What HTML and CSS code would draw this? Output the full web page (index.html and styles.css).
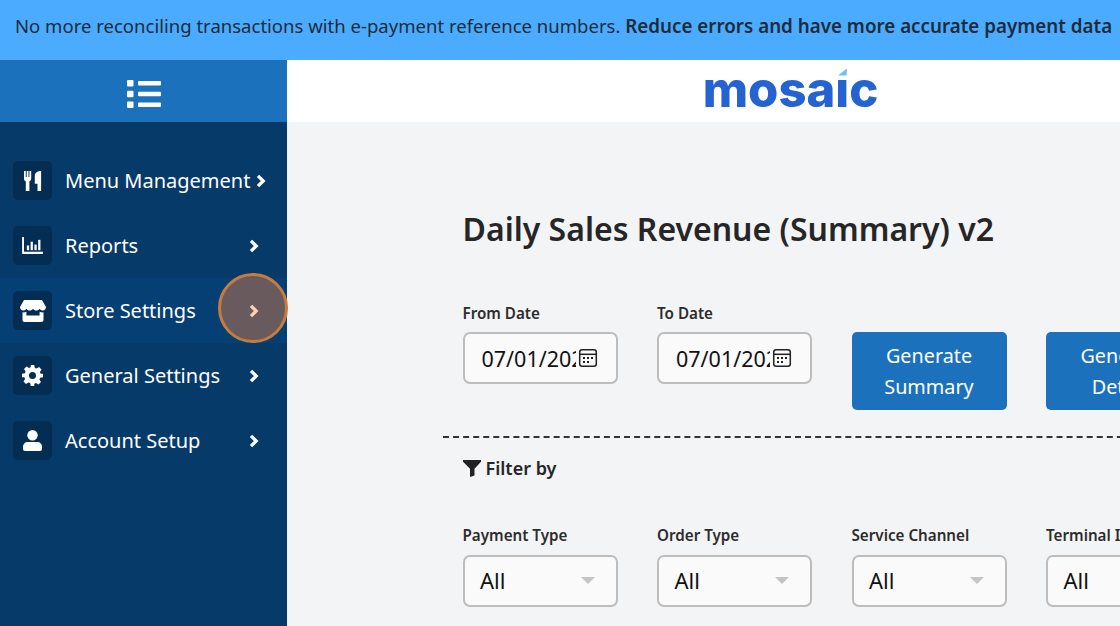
FILE: index.html
```html
<!DOCTYPE html>
<html lang="en">
<head>
<meta charset="utf-8">
<title>Daily Sales Revenue (Summary) v2</title>
<link rel="stylesheet" href="styles.css">
</head>
<body>
<div class="banner">No more reconciling transactions with e-payment reference numbers. <b>Reduce errors and have more accurate payment data</b></div>
<div class="app">
  <aside class="sidebar">
    <div class="side-head">
      <svg class="burger" viewBox="0 0 34 28" width="34" height="28" fill="#fff"><rect x="0" y="0" width="6.500" height="6.500" rx="1"/><rect x="0" y="10.800" width="6.500" height="6.500" rx="1"/><rect x="0" y="21.500" width="6.500" height="6.500" rx="1"/><rect x="11" y="1" width="23" height="4.600" rx="1"/><rect x="11" y="11.700" width="23" height="4.600" rx="1"/><rect x="11" y="22.400" width="23" height="4.600" rx="1"/></svg>
    </div>
    <nav class="nav">
      <a class="nav-item">
        <span class="nav-icon"><svg viewBox="0 0 20 24" width="18" height="22" fill="#fff"><path d="M0 1h2v6.500h1V1h2v6.500h1V1h2v8.500c0 1.500-1 2.500-2 2.800V23H2V12.300c-1-.3-2-1.300-2-2.800z"/><path d="M19 1v22h-4v-8h-3V6c0-3 3-5 7-5z"/></svg></span>
        <span class="nav-label">Menu Management</span>
        <svg class="chev chev-tight" viewBox="0 0 10 14" width="10" height="14"><path d="M2 1.800 7.200 7 2 12.200" fill="none" stroke="#fff" stroke-width="3.300"/></svg>
      </a>
      <a class="nav-item">
        <span class="nav-icon"><svg viewBox="0 0 22 18" width="21" height="17" fill="#fff"><path d="M0 0h2v15.500h20V18H0z"/><rect x="5" y="9" width="2.400" height="5"/><rect x="9" y="5" width="2.400" height="9"/><rect x="13" y="8" width="2.400" height="6"/><rect x="17" y="3" width="2.400" height="11"/></svg></span>
        <span class="nav-label">Reports</span>
        <svg class="chev" viewBox="0 0 10 14" width="10" height="14"><path d="M2 1.800 7.200 7 2 12.200" fill="none" stroke="#fff" stroke-width="3.300"/></svg>
      </a>
      <a class="nav-item active">
        <span class="nav-icon"><svg viewBox="0 0 26 22" width="26" height="22" fill="#fff"><path d="M4 0h18l4 7c0 2-1.500 3.500-3.200 3.500-1.300 0-2.500-.7-3.200-1.800-.7 1.100-1.900 1.800-3.300 1.800s-2.600-.7-3.300-1.800c-.7 1.100-1.900 1.800-3.300 1.800S7.100 9.800 6.400 8.700c-.7 1.100-1.900 1.800-3.200 1.800C1.500 10.500 0 9 0 7z"/><path d="M2.500 12.300c.9.200 2.400.2 3.900-.6v3.800h13.200v-3.800c1.500.8 3 .8 3.900.6V20a2 2 0 0 1-2 2H4.500a2 2 0 0 1-2-2z"/></svg></span>
        <span class="nav-label">Store Settings</span>
        <svg class="chev" viewBox="0 0 10 14" width="10" height="14"><path d="M2 1.800 7.200 7 2 12.200" fill="none" stroke="#fff" stroke-width="3.300"/></svg>
        <span class="spot"></span>
      </a>
      <a class="nav-item">
        <span class="nav-icon"><svg viewBox="0 0 24 24" width="21" height="21"><path fill="#fff" fill-rule="evenodd" d="M10 0h4l.7 3.300 1.900.8 2.900-1.800 2.800 2.800-1.800 2.900.8 1.900L24 10v4l-3.300.7-.8 1.900 1.800 2.900-2.800 2.800-2.900-1.800-1.900.8L14 24h-4l-.7-3.300-1.900-.8-2.900 1.800-2.800-2.800 1.800-2.900-.8-1.900L0 14v-4l3.300-.7.8-1.900-1.800-2.900 2.800-2.800 2.900 1.800 1.900-.8zM12 8a4 4 0 1 0 0 8 4 4 0 0 0 0-8z"/></svg></span>
        <span class="nav-label">General Settings</span>
        <svg class="chev" viewBox="0 0 10 14" width="10" height="14"><path d="M2 1.800 7.200 7 2 12.200" fill="none" stroke="#fff" stroke-width="3.300"/></svg>
      </a>
      <a class="nav-item">
        <span class="nav-icon"><svg viewBox="0 0 20 22" width="19" height="21" fill="#fff"><circle cx="10" cy="5.500" r="5.500"/><path d="M5 12.500h10c2.800 0 5 2.200 5 5V20a2 2 0 0 1-2 2H2a2 2 0 0 1-2-2v-2.500c0-2.800 2.200-5 5-5z"/></svg></span>
        <span class="nav-label">Account Setup</span>
        <svg class="chev" viewBox="0 0 10 14" width="10" height="14"><path d="M2 1.800 7.200 7 2 12.200" fill="none" stroke="#fff" stroke-width="3.300"/></svg>
      </a>
    </nav>
  </aside>
  <main class="main">
    <header class="topbar"><span class="logo">mosaic<svg class="logo-tick" viewBox="0 0 12 10" width="12" height="10"><rect width="12" height="10" fill="#fff"/><path d="M1 7.500 10 .5 9.500 7.500z" fill="#6cc0f5"/></svg></span></header>
    <section class="content">
      <h1 class="title">Daily Sales Revenue (Summary) v2</h1>
      <div class="row date-row">
        <div class="field"><label class="label">From Date</label>
          <div class="control date"><span class="date-text">07/01/2024</span>
            <svg class="cal" viewBox="0 0 20 20" width="20" height="20"><rect x="1.700" y="1.700" width="16.600" height="16.600" rx="2.500" fill="none" stroke="#222" stroke-width="1.500"/><path d="M2 6.300h16" stroke="#222" stroke-width="1.500"/><g fill="#222"><rect x="5" y="9" width="2" height="2"/><rect x="9" y="9" width="2" height="2"/><rect x="13" y="9" width="2" height="2"/><rect x="5" y="13" width="2" height="2"/><rect x="9" y="13" width="2" height="2"/></g></svg>
          </div></div>
        <div class="field"><label class="label">To Date</label>
          <div class="control date"><span class="date-text">07/01/2024</span>
            <svg class="cal" viewBox="0 0 20 20" width="20" height="20"><rect x="1.700" y="1.700" width="16.600" height="16.600" rx="2.500" fill="none" stroke="#222" stroke-width="1.500"/><path d="M2 6.300h16" stroke="#222" stroke-width="1.500"/><g fill="#222"><rect x="5" y="9" width="2" height="2"/><rect x="9" y="9" width="2" height="2"/><rect x="13" y="9" width="2" height="2"/><rect x="5" y="13" width="2" height="2"/><rect x="9" y="13" width="2" height="2"/></g></svg>
          </div></div>
        <button class="btn">Generate Summary</button>
        <button class="btn">Generate Details</button>
      </div>
      <div class="divider"></div>
      <div class="filter-head">
        <svg viewBox="0 0 18 17" width="18" height="17" fill="#222"><path d="M0 0h18v1.800l-6.500 7V15.500L7 17V8.800L0 1.800z"/></svg>
        <span>Filter by</span>
      </div>
      <div class="row filter-row">
        <div class="field"><label class="label">Payment Type</label><div class="control select"><span>All</span><i class="caret"></i></div></div>
        <div class="field"><label class="label">Order Type</label><div class="control select"><span>All</span><i class="caret"></i></div></div>
        <div class="field"><label class="label">Service Channel</label><div class="control select"><span>All</span><i class="caret"></i></div></div>
        <div class="field"><label class="label">Terminal ID</label><div class="control select"><span>All</span><i class="caret"></i></div></div>
      </div>
    </section>
  </main>
</div>
</body>
</html>
```
FILE: styles.css
```css
* { box-sizing: border-box; }
html, body { margin: 0; height: 100%; overflow: hidden; }
body { width: 1120px; height: 626px; font-family: "Noto Sans", sans-serif; color: #222; background: #f3f4f6; }

.banner { height: 60px; background: #4aabff; color: #1e2b38; font-size: 18.550px; line-height: 51px; padding-left: 15px; white-space: nowrap; overflow: hidden; }
.banner b { font-weight: 600; font-size: 18.800px; }

.app { display: flex; height: 566px; }

.sidebar { width: 287px; flex: none; background: #063a68; }
.side-head { height: 62px; padding-top: 6px; background: #1c71bc; display: flex; align-items: center; justify-content: center; }
.nav { padding-top: 26px; }
.nav-item { position: relative; height: 65px; display: flex; align-items: center; padding-left: 13px; color: #fff; }
.nav-item.active { background: #053f73; }
.nav-icon { width: 39px; height: 39px; flex: none; border-radius: 5px; background: #042d54; display: flex; align-items: center; justify-content: center; }
.nav-label { margin-left: 13px; font-size: 20px; white-space: nowrap; }
.chev { margin-left: auto; margin-right: 28px; flex: none; }
.chev-tight { margin-right: 21px; }
.spot { position: absolute; left: 218px; top: -5px; width: 70px; height: 70px; border-radius: 50%; border: 3px solid #c67c3c; background: rgba(255, 135, 60, .4); }

.main { flex: 1; min-width: 0; overflow: hidden; }
.topbar { height: 62px; background: #fff; display: flex; justify-content: center; align-items: center; padding-left: 174px; }
.logo { position: relative; font-family: Inter, sans-serif; font-weight: 800; font-size: 49px; line-height: 62px; color: #2563d1; margin-top: -3px; }
.logo-tick { position: absolute; left: 134px; top: 9px; }

.content { padding: 84px 0 0 175.500px; }
.title { margin: 0; font-size: 32px; line-height: 46px; font-weight: 600; color: #262626; white-space: nowrap; }

.row { display: flex; gap: 39.500px; width: 800px; }
.date-row { margin-top: 50px; height: 134px; }
.field { width: 155px; flex: none; }
.label { display: block; font-size: 15.200px; line-height: 22px; font-weight: 600; color: #2c2c2c; white-space: nowrap; margin-bottom: 8px; }
.filter-row .label { margin-bottom: 9px; }
.control { height: 52px; border: 2px solid #bdbdbd; border-radius: 7px; background: #fafafa; display: flex; align-items: center; font-size: 21.500px; color: #111; }
.date { padding-left: 17px; }
.date-text { width: 94px; overflow: hidden; white-space: nowrap; flex: none; }
.cal { margin-left: 2px; flex: none; }
.select { padding: 0 21px 2px 15.500px; justify-content: space-between; font-size: 22px; }
.caret { width: 0; height: 0; border-left: 7px solid transparent; border-right: 7px solid transparent; border-top: 7px solid #c4c4c4; }

.btn { width: 155px; height: 78px; flex: none; border: 0; border-radius: 5px; background: #1c71bc; color: #fff; font: 400 19.800px/31px "Noto Sans", sans-serif; padding: 0 25px; margin-top: 30px; align-self: flex-start; }

.divider { margin-left: -20px; width: 700px; border-top: 2px dashed #333; }
.filter-head { display: flex; align-items: center; gap: 5px; margin-top: 18px; font-size: 18px; line-height: 25px; font-weight: 600; color: #262626; }
.filter-row { margin-top: 43px; }
```
